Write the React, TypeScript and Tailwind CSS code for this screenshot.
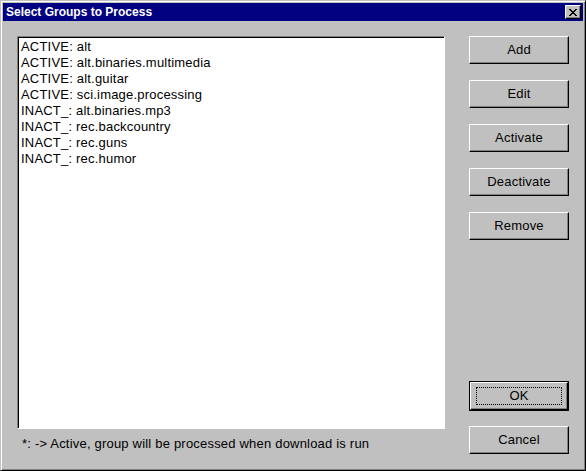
import React from "react";

const items = [
  "ACTIVE: alt",
  "ACTIVE: alt.binaries.multimedia",
  "ACTIVE: alt.guitar",
  "ACTIVE: sci.image.processing",
  "INACT_: alt.binaries.mp3",
  "INACT_: rec.backcountry",
  "INACT_: rec.guns",
  "INACT_: rec.humor",
];

function Btn({ label }: { label: string }) {
  return (
    <div className="w-[100px] h-[28px] flex items-center justify-center border border-t-white border-l-white border-r-black border-b-black shadow-[inset_-1px_-1px_#808080] bg-[#c0c0c0] text-[13px] text-black tracking-[0.2px]">
      {label}
    </div>
  );
}

export default function App() {
  return (
    <div
      className="w-[586px] h-[471px] bg-[#c0c0c0] border border-t-[#c0c0c0] border-l-[#c0c0c0] border-r-black border-b-black shadow-[inset_1px_1px_white,inset_-1px_-1px_#808080] p-[2px] flex flex-col"
      style={{ fontFamily: '"Liberation Sans", Arial, sans-serif' }}
    >
      <div className="h-[18px] bg-[#000080] flex items-center justify-between pl-[3px] pr-[2px]">
        <span className="text-white font-bold text-[12px] leading-none">Select Groups to Process</span>
        <div className="w-[16px] h-[14px] bg-[#c0c0c0] border border-t-white border-l-white border-r-black border-b-black shadow-[inset_-1px_-1px_#808080] flex items-center justify-center">
          <svg width="8" height="7" viewBox="0 0 8 7" shapeRendering="crispEdges">
            <path d="M0 0h2v1H0zM6 0h2v1H6zM1 1h2v1H1zM5 1h2v1H5zM2 2h4v1H2zM3 3h2v1H3zM2 4h4v1H2zM1 5h2v1H1zM5 5h2v1H5zM0 6h2v1H0zM6 6h2v1H6z" fill="black" />
          </svg>
        </div>
      </div>
      <div className="flex flex-1 pl-[14px] pt-[15px]">
        <div className="flex flex-col">
          <div className="w-[428px] h-[393px] bg-white border border-t-[#808080] border-l-[#808080] border-r-white border-b-white shadow-[inset_1px_1px_black] pl-[3px] pt-[2px]">
            {items.map((t) => (
              <div key={t} className="text-[13px] leading-[16px] h-[16px] text-black whitespace-nowrap tracking-[0.2px]">
                {t}
              </div>
            ))}
          </div>
          <div className="text-[13px] text-black pl-[5px] pt-[7px] leading-[16px] whitespace-nowrap tracking-[0.2px]">
            *: -&gt; Active, group will be processed when download is run
          </div>
        </div>
        <div className="ml-[24px] flex flex-col">
          <div className="flex flex-col gap-[16px]">
            <Btn label="Add" />
            <Btn label="Edit" />
            <Btn label="Activate" />
            <Btn label="Deactivate" />
            <Btn label="Remove" />
          </div>
          <div className="mt-[141px] w-[100px] h-[30px] border border-black">
            <div className="w-full h-full flex items-center justify-center border border-t-white border-l-white border-r-black border-b-black shadow-[inset_-1px_-1px_#808080] bg-[#c0c0c0]">
              <div className="w-[86px] h-[18px] border border-dotted border-black flex items-center justify-center text-[13px] text-black">
                OK
              </div>
            </div>
          </div>
          <div className="mt-[15px]">
            <Btn label="Cancel" />
          </div>
        </div>
      </div>
    </div>
  );
}
